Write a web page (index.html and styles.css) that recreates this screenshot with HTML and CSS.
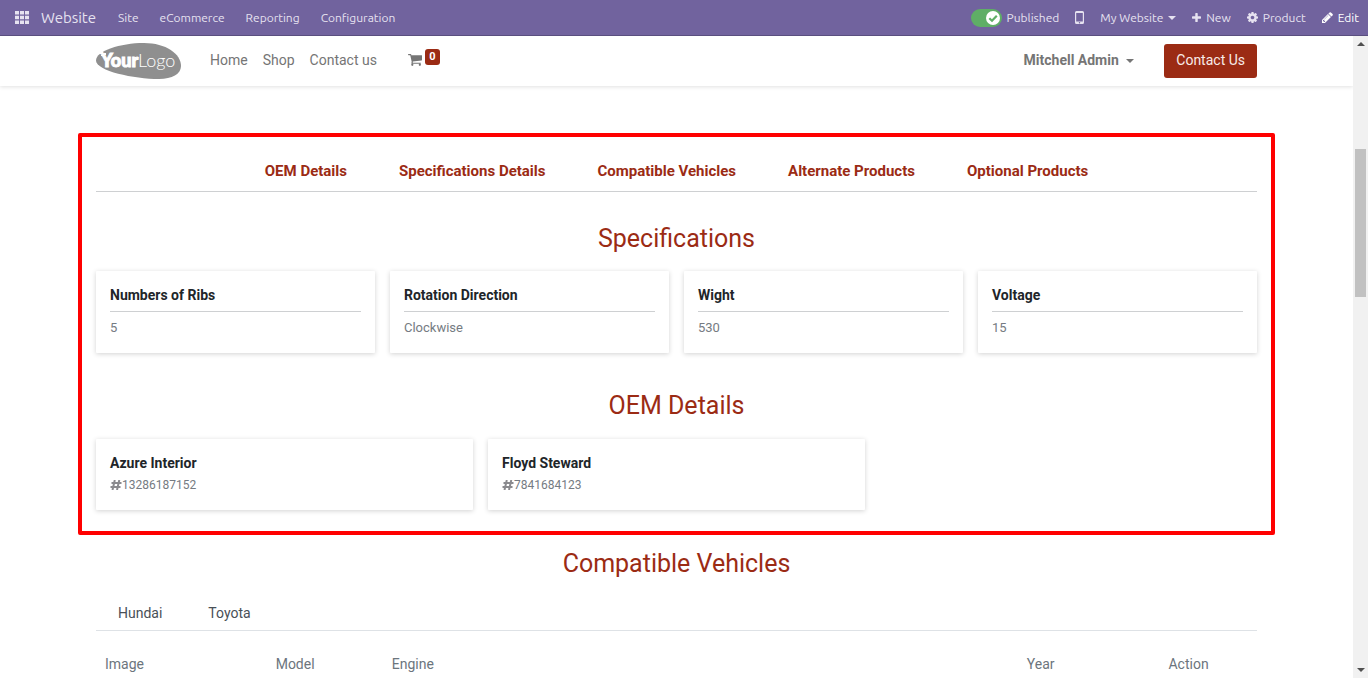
FILE: index.html
```html
<!DOCTYPE html>
<html lang="en">
<head>
<meta charset="utf-8">
<meta name="viewport" content="width=device-width, initial-scale=1">
<title>Website</title>
<link rel="stylesheet" href="styles.css">
</head>
<body>
<nav class="topbar" aria-label="Backend">
  <button class="apps" type="button" aria-label="Apps">
    <svg width="14" height="13" viewBox="0 0 14 13" fill="currentColor"><path d="M0 0h4v3.600H0zM5 0h4v3.600H5zM10 0h4v3.600h-4zM0 4.700h4v3.600H0zM5 4.700h4v3.600H5zM10 4.700h4v3.600h-4zM0 9.400h4V13H0zM5 9.400h4V13H5zM10 9.400h4V13h-4z"/></svg>
  </button>
  <a class="brand" href="#">Website</a>
  <div class="menu">
    <a href="#">Site</a>
    <a href="#">eCommerce</a>
    <a href="#">Reporting</a>
    <a href="#">Configuration</a>
  </div>
  <div class="tools">
    <label class="publish">
      <span class="switch">
        <input type="checkbox" checked>
        <svg width="14" height="14" viewBox="0 0 14 14"><circle cx="7" cy="7" r="7" fill="#fff"/><path d="M3.300 7.200 6 9.800l4.800-5" fill="none" stroke="#5fae66" stroke-width="2.200"/></svg>
      </span>
      <span>Published</span>
    </label>
    <button type="button" aria-label="Mobile preview">
      <svg width="9" height="13" viewBox="0 0 9 13"><path fill="currentColor" fill-rule="evenodd" d="M1.500 0h6Q9 0 9 1.500v10Q9 13 7.500 13h-6Q0 13 0 11.500v-10Q0 0 1.500 0zM1.200 2v8.400h6.600V2zM4.500 11a.7.7 0 1 0 0 1.400.7.7 0 0 0 0-1.400z"/></svg>
    </button>
    <button type="button">My Website <span class="caret"></span></button>
    <button type="button">
      <svg width="9" height="9" viewBox="192 128 1408 1408" fill="currentColor"><path d="M1600 736v192q0 40-28 68t-68 28h-416v416q0 40-28 68t-68 28h-192q-40 0-68-28t-28-68v-416h-416q-40 0-68-28t-28-68v-192q0-40 28-68t68-28h416v-416q0-40 28-68t68-28h192q40 0 68 28t28 68v416h416q40 0 68 28t28 68z"/></svg>New</button>
    <button type="button">
      <svg width="11" height="11" viewBox="128 128 1536 1536" fill="currentColor"><path d="M1152 896q0-106-75-181t-181-75-181 75-75 181 75 181 181 75 181-75 75-181zm512-109v222q0 12-8 23t-20 13l-185 28q-19 54-39 91 35 50 107 138 10 12 10 25t-9 23q-27 37-99 108t-94 71q-12 0-26-9l-138-108q-44 23-91 38-16 136-29 186-7 28-36 28h-222q-14 0-24.500-8.500t-11.500-21.500l-28-184q-49-16-90-37l-141 107q-10 9-25 9-14 0-25-11-126-114-165-168-7-10-7-23 0-12 8-23 15-21 51-66.500t54-70.500q-27-50-41-99l-183-27q-13-2-21-12.500t-8-23.500v-222q0-12 8-23t19-13l186-28q14-46 39-92-40-57-107-138-10-12-10-24 0-10 9-23 26-36 98.500-107.500t94.500-71.500q13 0 26 10l138 107q44-23 91-38 16-136 29-186 7-28 36-28h222q14 0 24.500 8.500t11.500 21.500l28 184q49 16 90 37l142-107q9-9 24-9 13 0 25 10 129 119 165 170 7 8 7 22 0 12-8 23-15 21-51 66.500t-54 70.500q26 50 41 98l183 28q13 2 21 12.500t8 23.500z"/></svg>Product</button>
    <button type="button" class="edit">
      <svg width="11" height="11" viewBox="128 128 1536 1536" fill="currentColor"><path d="M491 1536l91-91-235-235-91 91v107h128v128h107zm523-928q0-22-22-22-10 0-17 7l-542 542q-7 7-7 17 0 22 22 22 10 0 17-7l542-542q7-7 7-17zm-54-192l416 416-832 832h-416v-416zm683 96q0 53-37 90l-166 166-416-416 166-165q36-38 90-38 53 0 91 38l235 234q37 39 37 91z"/></svg>Edit</button>
  </div>
</nav>

<div class="viewport">
  <div class="page">
    <header class="site-header">
      <div class="container header-row">
        <a class="logo" href="#" aria-label="Your Logo">
          <svg width="86" height="36" viewBox="0 0 86 36">
            <path fill="#8f8f8f" d="M0 17.500C0 8 24 0 48 0c22 0 37 11 37 23 0 8-9 13-22 13C38 36 0 28 0 17.500z"/>
            <path fill="#fff" d="M4 9h3v2H4zM8 10h2v2H8zM5 12h2v1H5z"/>
            <text x="5" y="24" class="logo-your">Your</text>
            <text x="42" y="24" class="logo-light">Logo</text>
          </svg>
        </a>
        <nav class="site-nav" aria-label="Site">
          <a href="#">Home</a>
          <a href="#">Shop</a>
          <a href="#">Contact us</a>
        </nav>
        <a class="cart" href="#" aria-label="Cart">
          <svg width="14" height="12" viewBox="64 256 1664 1408" fill="currentColor"><path d="M704 1536q0 52-38 90t-90 38-90-38-38-90 38-90 90-38 90 38 38 90zm896 0q0 52-38 90t-90 38-90-38-38-90 38-90 90-38 90 38 38 90zm128-1088v512q0 24-16.500 42.500t-40.500 21.500l-1044 122q13 60 13 70 0 16-24 64h920q26 0 45 19t19 45-19 45-45 19h-1024q-26 0-45-19t-19-45q0-11 8-31.500t16-36 21.500-40 15.500-29.500l-177-823h-204q-26 0-45-19t-19-45 19-45 45-19h256q16 0 28.500 6.500t19.500 15.500 13 24.500 8 26 5.500 29.500 4.500 26h1201q26 0 45 19t19 45z"/></svg>
          <span class="badge">0</span>
        </a>
        <button class="user" type="button">Mitchell Admin <span class="caret"></span></button>
        <a class="cta" href="#">Contact Us</a>
      </div>
    </header>

    <main>
      <div class="frame">
        <nav class="section-nav" aria-label="Sections">
          <a href="#oem">OEM Details</a>
          <a href="#specs">Specifications Details</a>
          <a href="#vehicles">Compatible Vehicles</a>
          <a href="#">Alternate Products</a>
          <a href="#">Optional Products</a>
        </nav>

        <section id="specs" class="specs">
          <h2>Specifications</h2>
          <div class="grid grid-4">
            <article class="card"><h3>Numbers of Ribs</h3><p>5</p></article>
            <article class="card"><h3>Rotation Direction</h3><p>Clockwise</p></article>
            <article class="card"><h3>Wight</h3><p>530</p></article>
            <article class="card"><h3>Voltage</h3><p>15</p></article>
          </div>
        </section>

        <section id="oem" class="oem">
          <h2>OEM Details</h2>
          <div class="grid grid-3">
            <article class="card"><h3>Azure Interior</h3>
              <p><svg class="hash" width="12" height="10" viewBox="0 0 12 10"><path d="M4.800 0 2.500 10M9.300 0 7 10M1.500 3h10M.5 7h10"/></svg>13286187152</p></article>
            <article class="card"><h3>Floyd Steward</h3>
              <p><svg class="hash" width="12" height="10" viewBox="0 0 12 10"><path d="M4.800 0 2.500 10M9.300 0 7 10M1.500 3h10M.5 7h10"/></svg>7841684123</p></article>
          </div>
        </section>
      </div>

      <section id="vehicles" class="container vehicles">
        <h2>Compatible Vehicles</h2>
        <div class="tabs" role="tablist">
          <button type="button" role="tab">Hundai</button>
          <button type="button" role="tab">Toyota</button>
        </div>
        <table>
          <thead>
            <tr><th class="c-image">Image</th><th class="c-model">Model</th><th>Engine</th><th class="c-year">Year</th><th class="c-action">Action</th></tr>
          </thead>
        </table>
      </section>
    </main>
  </div>
  <div class="scrollbar" aria-hidden="true">
    <span class="arrow up"></span>
    <span class="track"><span class="thumb"></span></span>
    <span class="arrow down"></span>
  </div>
</div>
</body>
</html>
```

FILE: styles.css
```css
* { box-sizing: border-box; }

body {
  margin: 0;
  height: 100vh;
  display: flex;
  flex-direction: column;
  overflow: hidden;
  background: #fff;
  color: #212529;
  font: 14px/20px Roboto, sans-serif;
}

a { color: inherit; text-decoration: none; }

button {
  padding: 0;
  border: 0;
  background: none;
  color: inherit;
  font: inherit;
  cursor: pointer;
}

h2, h3, p { margin: 0; }

.caret {
  display: inline-block;
  border: 4px solid transparent;
  border-top-color: currentColor;
  border-bottom: 0;
  vertical-align: middle;
}

/* Backend bar */
.topbar {
  flex: none;
  display: flex;
  align-items: center;
  height: 36px;
  padding: 0 9px 0 15px;
  border-bottom: 1px solid #5a4f7f;
  background: #71639e;
  color: #e6e2f0;
  font: 12px/20px Ubuntu, "Noto Sans", sans-serif;
}

.apps { display: flex; margin-right: 12px; }
.brand { margin-right: 22px; font-size: 15px; }
.menu { display: flex; gap: 21px; }
.tools { display: flex; align-items: center; gap: 16px; margin-left: auto; }
.tools button { display: flex; align-items: center; gap: 5px; }
.tools .edit { color: #fff; }
.publish { display: flex; align-items: center; gap: 5px; }

.switch {
  display: flex;
  justify-content: flex-end;
  width: 31px;
  height: 18px;
  padding: 2px;
  border-radius: 9px;
  background: #5fae66;
}

.switch input {
  appearance: none;
  flex: 1;
  margin: 0;
}

/* Scrolling area */
.viewport { flex: 1; display: flex; min-height: 0; }
.page { flex: 1; min-width: 0; overflow: hidden; }

.container { width: calc(100% - 32px); max-width: 1161px; margin: 0 auto; }

.site-header { box-shadow: 0 1px 4px rgba(0, 0, 0, .12); }
.header-row { display: flex; align-items: center; height: 50px; color: #757575; }
.logo { display: flex; margin-right: 28px; }
.logo-your { fill: #fff; stroke: #fff; stroke-width: 1; font: 900 18px Lato, sans-serif; }
.logo-light { fill: #fff; font: 300 18px Lato, sans-serif; }
.site-nav { display: flex; gap: 15px; padding-bottom: 2px; }
.cart { display: flex; align-items: center; gap: 3px; margin-left: 31px; padding-bottom: 2px; }

.badge {
  align-self: flex-start;
  width: 15px;
  margin-bottom: 6px;
  border-radius: 3px;
  background: #9b2b14;
  color: #fff;
  font-size: 11px;
  font-weight: 700;
  line-height: 16px;
  text-align: center;
}

.user { margin-left: auto; padding-bottom: 2px; font-weight: 700; }
.user .caret { margin-left: 4px; }

.cta {
  margin-left: 30px;
  padding: 6px 12px 8px;
  border-radius: 3px;
  background: #9b2b14;
  color: #f8ece9;
}

/* Outlined product details */
.frame {
  width: calc(100% - 4px);
  max-width: 1197px;
  margin: 47px auto 12px;
  padding: 24px 14px 21px;
  border: 4px solid #f00;
  border-radius: 2px;
}

.section-nav {
  display: flex;
  justify-content: center;
  gap: 52px;
  padding-bottom: 10px;
  border-bottom: 1px solid #ced0d2;
  color: #9b2b14;
  font-size: 15px;
  font-weight: 700;
}

h2 {
  color: #9b2b14;
  font-size: 25px;
  font-weight: 400;
  line-height: 34px;
  text-align: center;
}

.specs { padding-top: 30px; }
.oem { padding-top: 36px; }
.grid { display: grid; gap: 15px; margin-top: 15px; }
.oem .grid { margin-top: 16px; }
.grid-4 { grid-template-columns: repeat(4, 1fr); }
.grid-3 { grid-template-columns: repeat(3, 1fr); }

.card {
  padding: 14px 14px 17px;
  border-radius: 1px;
  box-shadow: 0 1px 5px rgba(0, 0, 0, .18);
}

.card h3 { font-size: 14px; font-weight: 700; line-height: 20px; }
.card p { color: #757b82; line-height: 16px; }

.specs h3 { padding-bottom: 6px; border-bottom: 1px solid #ced0d2; }
.specs p { margin-top: 8px; font-size: 13px; }

.oem p { display: flex; align-items: center; margin-top: 4px; font-size: 12px; }
.hash { fill: none; stroke: #8a8a8e; stroke-width: 2; }

/* Vehicles */
.tabs {
  display: flex;
  gap: 46px;
  margin-top: 22px;
  padding: 0 22px 7px;
  border-bottom: 1px solid #dee2e6;
  color: #495057;
}

table {
  width: 100%;
  margin-top: 14px;
  border-collapse: collapse;
  table-layout: fixed;
  color: #6c757d;
}

th { padding: 9px; font-weight: 400; text-align: left; }
.c-image { width: 14.7%; }
.c-model { width: 10%; }
.c-year { width: 12.2%; }
.c-action { width: 8.4%; }

/* Scrollbar */
.scrollbar {
  flex: none;
  display: flex;
  flex-direction: column;
  align-items: center;
  width: 15px;
  padding: 6px 0;
  background: #f1f1f1;
}

.arrow { border: 4px solid transparent; }
.arrow.up { border-top: 0; border-bottom-color: #505050; }
.arrow.down { border-bottom: 0; border-top-color: #505050; }
.track { flex: 1; width: 11px; padding-top: 103px; }
.thumb { display: block; height: 148px; background: #c1c1c1; }
```
